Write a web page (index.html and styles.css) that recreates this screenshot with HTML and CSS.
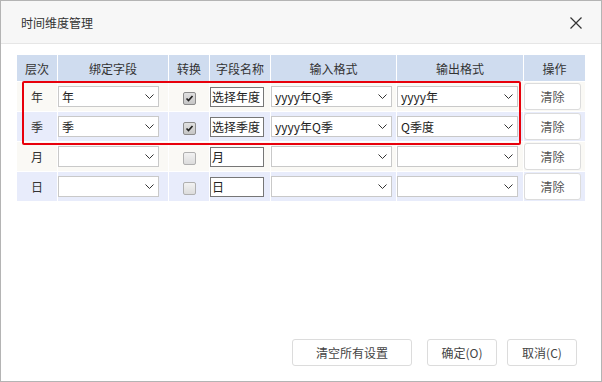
FILE: index.html
```html
<!DOCTYPE html>
<html lang="zh-CN">
<head>
    <meta charset="UTF-8">
    <title>时间维度管理</title>
    <link rel="stylesheet" href="styles.css">
</head>
<body>
    <div class="dialog">
        <div class="dialog-header">
            <span class="dialog-title">时间维度管理</span>
            <button class="dialog-close" type="button">
                <svg width="12" height="12" viewBox="0 0 12 12"><path d="M0.5 0.5 L11.5 11.5 M11.5 0.5 L0.5 11.5" stroke="#333" stroke-width="1.2" fill="none"/></svg>
            </button>
        </div>

        <div class="dialog-body">
            <table class="level-table">
                <colgroup>
                    <col style="width:40px">
                    <col style="width:110px">
                    <col style="width:40px">
                    <col style="width:60px">
                    <col style="width:125px">
                    <col style="width:126px">
                    <col style="width:61px">
                </colgroup>
                <thead>
                    <tr>
                        <th>层次</th>
                        <th>绑定字段</th>
                        <th>转换</th>
                        <th>字段名称</th>
                        <th>输入格式</th>
                        <th>输出格式</th>
                        <th>操作</th>
                    </tr>
                </thead>
                <tbody>
                    <tr class="row-odd">
                        <td class="cell-level">年</td>
                        <td><div class="select select-short"><span>年</span><svg width="9" height="5" viewBox="0 0 9 5"><path d="M0.5 0.5 L4.5 4.5 L8.5 0.5" stroke="#333" fill="none"/></svg></div></td>
                        <td class="cell-check"><span class="checkbox checked"><svg width="11" height="11" viewBox="0 0 11 11"><path d="M2.5 5.5 L4.5 7.5 L8.5 3" stroke="#222" stroke-width="1.7" fill="none"/></svg></span></td>
                        <td><input class="name-input" type="text" value="选择年度"></td>
                        <td><div class="select select-wide"><span>yyyy年Q季</span><svg width="9" height="5" viewBox="0 0 9 5"><path d="M0.5 0.5 L4.5 4.5 L8.5 0.5" stroke="#333" fill="none"/></svg></div></td>
                        <td><div class="select select-wide"><span>yyyy年</span><svg width="9" height="5" viewBox="0 0 9 5"><path d="M0.5 0.5 L4.5 4.5 L8.5 0.5" stroke="#333" fill="none"/></svg></div></td>
                        <td><button class="btn-clear" type="button">清除</button></td>
                    </tr>
                    <tr class="row-even">
                        <td class="cell-level">季</td>
                        <td><div class="select select-short"><span>季</span><svg width="9" height="5" viewBox="0 0 9 5"><path d="M0.5 0.5 L4.5 4.5 L8.5 0.5" stroke="#333" fill="none"/></svg></div></td>
                        <td class="cell-check"><span class="checkbox checked"><svg width="11" height="11" viewBox="0 0 11 11"><path d="M2.5 5.5 L4.5 7.5 L8.5 3" stroke="#222" stroke-width="1.7" fill="none"/></svg></span></td>
                        <td><input class="name-input" type="text" value="选择季度"></td>
                        <td><div class="select select-wide"><span>yyyy年Q季</span><svg width="9" height="5" viewBox="0 0 9 5"><path d="M0.5 0.5 L4.5 4.5 L8.5 0.5" stroke="#333" fill="none"/></svg></div></td>
                        <td><div class="select select-wide"><span>Q季度</span><svg width="9" height="5" viewBox="0 0 9 5"><path d="M0.5 0.5 L4.5 4.5 L8.5 0.5" stroke="#333" fill="none"/></svg></div></td>
                        <td><button class="btn-clear" type="button">清除</button></td>
                    </tr>
                    <tr class="row-odd">
                        <td class="cell-level">月</td>
                        <td><div class="select select-short"><span></span><svg width="9" height="5" viewBox="0 0 9 5"><path d="M0.5 0.5 L4.5 4.5 L8.5 0.5" stroke="#333" fill="none"/></svg></div></td>
                        <td class="cell-check"><span class="checkbox"></span></td>
                        <td><input class="name-input" type="text" value="月"></td>
                        <td><div class="select select-wide"><span></span><svg width="9" height="5" viewBox="0 0 9 5"><path d="M0.5 0.5 L4.5 4.5 L8.5 0.5" stroke="#333" fill="none"/></svg></div></td>
                        <td><div class="select select-wide"><span></span><svg width="9" height="5" viewBox="0 0 9 5"><path d="M0.5 0.5 L4.5 4.5 L8.5 0.5" stroke="#333" fill="none"/></svg></div></td>
                        <td><button class="btn-clear" type="button">清除</button></td>
                    </tr>
                    <tr class="row-even">
                        <td class="cell-level">日</td>
                        <td><div class="select select-short"><span></span><svg width="9" height="5" viewBox="0 0 9 5"><path d="M0.5 0.5 L4.5 4.5 L8.5 0.5" stroke="#333" fill="none"/></svg></div></td>
                        <td class="cell-check"><span class="checkbox"></span></td>
                        <td><input class="name-input" type="text" value="日"></td>
                        <td><div class="select select-wide"><span></span><svg width="9" height="5" viewBox="0 0 9 5"><path d="M0.5 0.5 L4.5 4.5 L8.5 0.5" stroke="#333" fill="none"/></svg></div></td>
                        <td><div class="select select-wide"><span></span><svg width="9" height="5" viewBox="0 0 9 5"><path d="M0.5 0.5 L4.5 4.5 L8.5 0.5" stroke="#333" fill="none"/></svg></div></td>
                        <td><button class="btn-clear" type="button">清除</button></td>
                    </tr>
                </tbody>
            </table>
        </div>

        <div class="dialog-footer">
            <button class="btn btn-reset" type="button">清空所有设置</button>
            <button class="btn btn-ok" type="button">确定(O)</button>
            <button class="btn btn-cancel" type="button">取消(C)</button>
        </div>

        <!-- red annotation around the configured rows -->
        <div class="highlight-box"></div>
    </div>
</body>
</html>
```

FILE: styles.css
```css
body {
    margin: 0;
    font-family: "Noto Sans CJK SC", "Noto Sans", sans-serif;
    font-size: 12px;
    color: #333;
}
.dialog {
    position: relative;
    width: 602px;
    height: 382px;
    box-sizing: border-box;
    border: 1px solid #b4b4b4;
    background: #fff;
    display: flex;
    flex-direction: column;
}
.dialog-header {
    flex: none;
    height: 42px;
    background: #f7f7f7;
    border-bottom: 1px solid #e6e6e6;
    display: flex;
    align-items: center;
    justify-content: space-between;
    padding: 1px 19px 0 20px;
    box-sizing: content-box;
    height: 41px;
}
.dialog-title {
    font-size: 12px;
    color: #333;
}
.dialog-close {
    border: none;
    background: none;
    padding: 0;
    width: 12px;
    height: 12px;
    display: flex;
}
.dialog-body {
    flex: 1;
    padding: 10px 15px 0;
}
.level-table {
    border-collapse: separate;
    border-spacing: 1px;
    table-layout: fixed;
    width: 570px;
}
.level-table th {
    background: #cfdcef;
    height: 26px;
    padding: 0;
    font-weight: normal;
    text-align: center;
    color: #333;
}
.level-table td {
    height: 29px;
    padding: 0;
    vertical-align: middle;
}
.row-odd td {
    background: #faf9f5;
}
.row-even td {
    background: #e8ecfb;
}
.cell-level {
    text-align: center;
}
.cell-check {
    text-align: center;
}
.select {
    box-sizing: border-box;
    height: 21px;
    border: 1px solid #c9c9c9;
    background: #fff;
    display: flex;
    align-items: center;
    justify-content: space-between;
    padding: 0 4px 0 3px;
    color: #222;
}
.select-short {
    width: 101px;
}
.select-wide {
    width: 121px;
}
.checkbox {
    display: inline-flex;
    align-items: center;
    justify-content: center;
    width: 13px;
    height: 13px;
    box-sizing: border-box;
    border: 1px solid #b0b0b0;
    border-radius: 2px;
    background: linear-gradient(#f2f2f2, #dcdcdc);
    vertical-align: middle;
}
.checkbox.checked {
    border-color: #8c8c8c;
    background: linear-gradient(#e0e0e0, #c6c6c6);
}
.name-input {
    display: block;
    box-sizing: border-box;
    width: 54px;
    height: 20px;
    border: 1px solid #767676;
    padding: 0 1px;
    font: inherit;
    color: #222;
    background: #fff;
}
.btn-clear {
    display: block;
    width: 57px;
    height: 27px;
    border: 1px solid #dcdcdc;
    border-radius: 3px;
    background: #fff;
    padding: 0;
    font: inherit;
    color: #555;
}
.dialog-footer {
    display: flex;
    justify-content: flex-end;
    padding: 0 24px 15px 0;
}
.btn {
    height: 27px;
    border: 1px solid #dcdcdc;
    border-radius: 3px;
    background: #fff;
    padding: 0;
    font: inherit;
    color: #444;
}
.btn-reset {
    width: 120px;
    margin-right: 15px;
}
.btn-ok {
    width: 70px;
    margin-right: 10px;
}
.btn-cancel {
    width: 70px;
}
.highlight-box {
    position: absolute;
    left: 21px;
    top: 80px;
    width: 499px;
    height: 64px;
    box-sizing: border-box;
    border: 2px solid #e8000b;
    border-radius: 2px;
    pointer-events: none;
}
```
